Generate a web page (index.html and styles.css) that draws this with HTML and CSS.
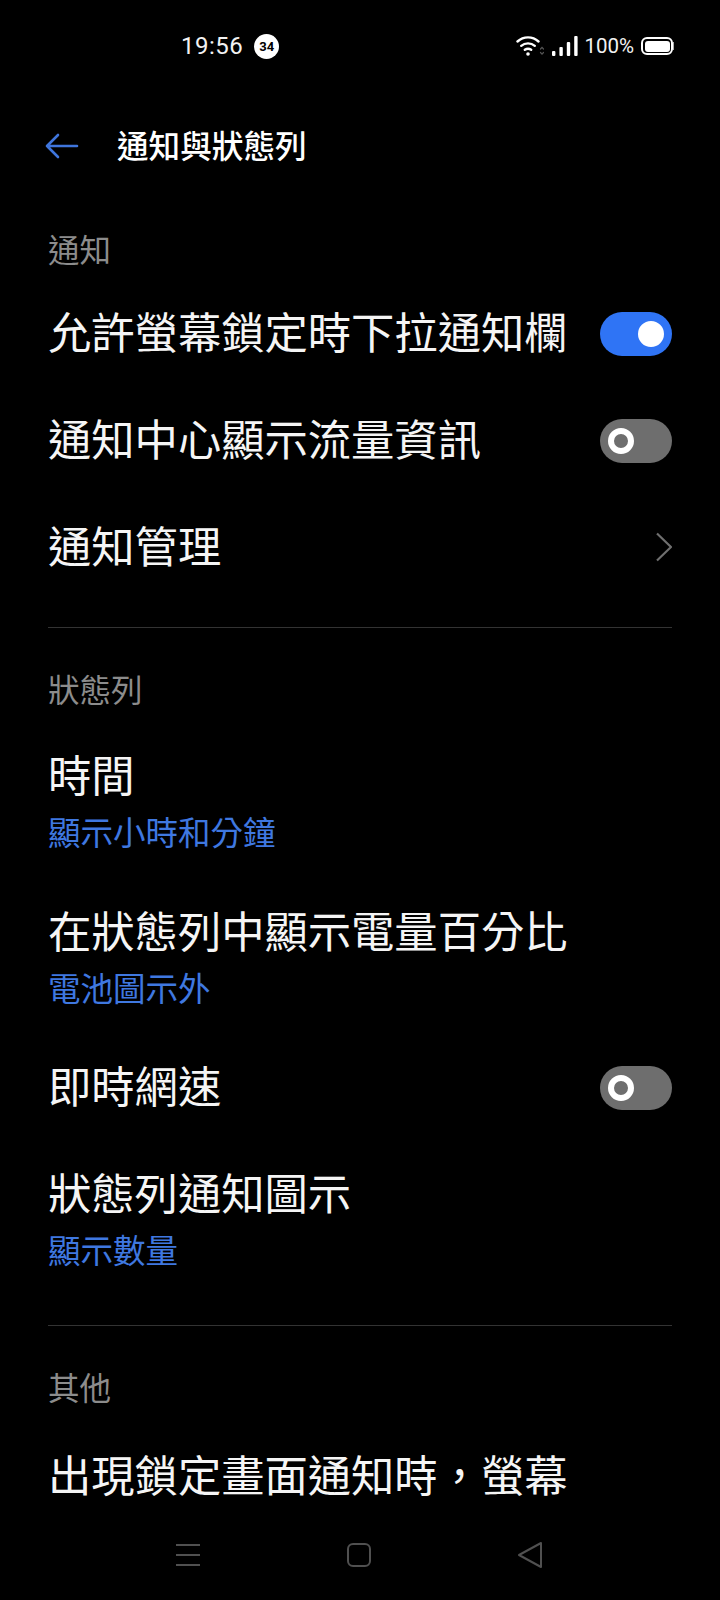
FILE: index.html
```html
<!DOCTYPE html>
<html lang="zh-Hant">
<head>
  <meta charset="UTF-8">
  <meta name="viewport" content="width=device-width, initial-scale=1.0">
  <title>通知與狀態列</title>
  <link rel="stylesheet" href="styles.css">
</head>
<body>
  <div class="screen">
    <div class="status-bar">
      <div class="status-left">
        <span class="clock">19:56</span>
        <span class="badge">34</span>
      </div>
      <div class="status-right">
        <svg class="wifi" width="28" height="24" viewBox="0 0 28 24" fill="none" stroke="#fff" stroke-width="2.4" stroke-linecap="round">
          <path d="M1.5 7.5C7.5 2 16.5 2 22.5 7.5"/>
          <path d="M5.2 11.8C9 8.6 15 8.6 18.8 11.8"/>
          <path d="M8.8 15.8C10.8 14.4 13.2 14.4 15.2 15.8"/>
          <circle cx="12" cy="20" r="1.8" fill="#fff" stroke="none"/>
          <path d="M24.5 15l1.5-1.6 1.5 1.6M24.5 18.5l1.5 1.6 1.5-1.6" stroke="#555" stroke-width="1.2"/>
        </svg>
        <svg class="signal" width="26" height="20" viewBox="0 0 26 20" fill="#fff">
          <rect x="0" y="15" width="3.4" height="5" rx="1"/>
          <rect x="7.4" y="11" width="3.4" height="9" rx="1"/>
          <rect x="14.8" y="6" width="3.4" height="14" rx="1"/>
          <rect x="22.2" y="0" width="3.4" height="20" rx="1"/>
        </svg>
        <span class="battery-text">100%</span>
        <span class="battery"><span class="battery-fill"></span></span>
      </div>
    </div>

    <div class="title-bar">
      <svg class="back" width="34" height="26" viewBox="0 0 34 26" fill="none" stroke="#3f75dc" stroke-width="2.6" stroke-linecap="round" stroke-linejoin="round">
        <path d="M32 13H2M13 2L2 13l11 11"/>
      </svg>
      <h1>通知與狀態列</h1>
    </div>

    <section class="group">
      <h2>通知</h2>
      <div class="row">
        <span class="row-title">允許螢幕鎖定時下拉通知欄</span>
        <span class="switch on"><span class="knob"></span></span>
      </div>
      <div class="row">
        <span class="row-title">通知中心顯示流量資訊</span>
        <span class="switch"><span class="knob"></span></span>
      </div>
      <div class="row">
        <span class="row-title">通知管理</span>
        <svg class="chevron" width="16" height="30" viewBox="0 0 16 30" fill="none" stroke="#6f6f6f" stroke-width="2.2">
          <path d="M1 1.5l14 13.5L1 28.5"/>
        </svg>
      </div>
    </section>

    <section class="group">
      <h2>狀態列</h2>
      <div class="row tall">
        <div>
          <div class="row-title">時間</div>
          <div class="row-sub">顯示小時和分鐘</div>
        </div>
      </div>
      <div class="row tall">
        <div>
          <div class="row-title">在狀態列中顯示電量百分比</div>
          <div class="row-sub">電池圖示外</div>
        </div>
      </div>
      <div class="row compact">
        <span class="row-title">即時網速</span>
        <span class="switch"><span class="knob"></span></span>
      </div>
      <div class="row tall">
        <div>
          <div class="row-title">狀態列通知圖示</div>
          <div class="row-sub">顯示數量</div>
        </div>
      </div>
    </section>

    <section class="group">
      <h2>其他</h2>
      <div class="row">
        <span class="row-title">出現鎖定畫面通知時&#xFF0C;螢幕</span>
      </div>
    </section>

    <div class="nav-bar">
      <svg width="26" height="24" viewBox="0 0 26 24" fill="none" stroke="#505050" stroke-width="2">
        <path d="M1 2h24M1 12h24M1 22h24"/>
      </svg>
      <svg width="26" height="26" viewBox="0 0 26 26" fill="none" stroke="#505050" stroke-width="2">
        <rect x="2" y="2" width="22" height="22" rx="5"/>
      </svg>
      <svg width="26" height="28" viewBox="0 0 26 28" fill="none" stroke="#505050" stroke-width="2" stroke-linejoin="round">
        <path d="M2 14L24 2v24z"/>
      </svg>
    </div>
  </div>
</body>
</html>
```

FILE: styles.css
```css
/* General Styles */
* {
  box-sizing: border-box;
}

body {
  margin: 0;
  background-color: #000;
  color: #fff;
  font-family: "Noto Sans CJK TC", "Noto Sans", sans-serif;
}

.screen {
  position: relative;
  width: 720px;
  height: 1600px;
  overflow: hidden;
  background-color: #000;
}

/* Status bar */
.status-bar {
  display: flex;
  justify-content: space-between;
  align-items: center;
  height: 46px;
  margin-top: 23px;
  padding: 0 47px 0 181px;
  font-family: Roboto, sans-serif;
}

.status-left,
.status-right {
  display: flex;
  align-items: center;
}

.clock {
  font-size: 24px;
  letter-spacing: 0.5px;
  color: #f2f2f2;
}

.badge {
  display: flex;
  justify-content: center;
  align-items: center;
  width: 25px;
  height: 25px;
  margin-left: 11px;
  border-radius: 50%;
  background-color: #fff;
  color: #000;
  font-size: 13px;
  font-weight: 700;
}

.wifi {
  margin-right: 8px;
}

.signal {
  margin-right: 6px;
}

.battery-text {
  font-size: 20.5px;
  color: #f2f2f2;
  margin-right: 7px;
}

.battery {
  display: block;
  position: relative;
  width: 32px;
  height: 18px;
  padding: 1.5px;
  border: 2px solid #fff;
  border-radius: 6px;
}

.battery::after {
  content: "";
  position: absolute;
  right: -3px;
  top: 3px;
  width: 1px;
  height: 8px;
  background-color: #aaa;
}

.battery-fill {
  display: block;
  height: 100%;
  background-color: #fff;
  border-radius: 3px;
}

/* Title */
.title-bar {
  display: flex;
  align-items: center;
  height: 60px;
  margin-top: 45px;
  margin-bottom: 14px;
  padding-left: 45px;
}

.back {
  margin-top: 3px;
}

.title-bar h1 {
  margin: 0 0 0 38px;
  font-size: 31.6px;
  font-weight: 500;
  line-height: 60px;
}

/* Groups */
.group {
  margin: 0 48px;
  padding-top: 37px;
  padding-bottom: 26px;
  border-bottom: 1px solid #333;
}

.group:last-of-type {
  border-bottom: none;
}

.group:last-of-type .row {
  height: 117px;
}

.group h2 {
  margin: 0 0 9px;
  font-size: 31.5px;
  font-weight: 400;
  line-height: 46px;
  color: #8c8c8c;
}

.row {
  display: flex;
  justify-content: space-between;
  align-items: center;
  height: 107px;
}

.row.tall {
  height: 156px;
}

.row.tall:last-child {
  margin-bottom: 5px;
}

.row.compact {
  height: 101px;
  margin-top: 5px;
}

.row > .row-title {
  padding-bottom: 7px;
}

.row-title {
  font-size: 43.3px;
  line-height: 60px;
  color: #f5f5f5;
}

.row-sub {
  font-size: 32.5px;
  line-height: 46px;
  margin-top: 5px;
  color: #3f78e0;
}

/* Switches */
.switch {
  display: flex;
  align-items: center;
  justify-content: flex-start;
  width: 72px;
  height: 44px;
  padding: 0 8px;
  border-radius: 22px;
  background-color: #6e6e6e;
}

.switch.on {
  justify-content: flex-end;
  background-color: #2f74f5;
}

.knob {
  display: block;
  width: 26px;
  height: 26px;
  border: 6px solid #fff;
  border-radius: 50%;
}

.switch.on .knob {
  background-color: #fff;
}

.chevron {
  margin-top: -2px;
}

/* Navigation bar */
.nav-bar {
  position: absolute;
  left: 0;
  right: 0;
  bottom: 0;
  display: flex;
  justify-content: space-between;
  align-items: center;
  height: 90px;
  padding: 0 177px 0 175px;
  background-color: #000;
}
```
